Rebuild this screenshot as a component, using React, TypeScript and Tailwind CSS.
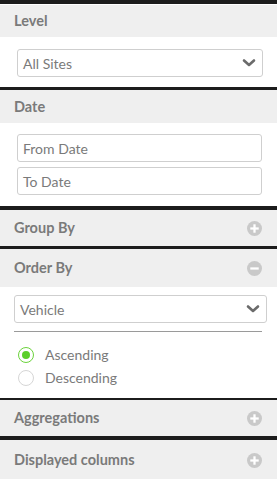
import React from 'react';

const font = { fontFamily: 'Lato, "Noto Sans", sans-serif' };

const Chevron = () => (
  <svg width="14" height="10" viewBox="0 0 14 10" className="shrink-0">
    <path d="M2 2.5 L7 7 L12 2.5" fill="none" stroke="#6b6b6b" strokeWidth="2.6" strokeLinecap="round" strokeLinejoin="round" />
  </svg>
);

const CircleIcon: React.FC<{ minus?: boolean }> = ({ minus }) => (
  <svg width="15" height="15" viewBox="0 0 16 16" className="shrink-0">
    <circle cx="8" cy="8" r="8" fill="#c9c9c9" />
    <rect x="3.5" y="6.8" width="9" height="2.4" fill="#fff" />
    {!minus && <rect x="6.8" y="3.5" width="2.4" height="9" fill="#fff" />}
  </svg>
);

const Header: React.FC<{ title: string; icon?: 'plus' | 'minus'; h: string }> = ({ title, icon, h }) => (
  <div className={`flex items-center justify-between bg-[#efefef] pl-[14px] pr-[15px] ${h}`}>
    <span className="text-[14.5px] font-bold text-[#7a7a7a]">{title}</span>
    {icon && <CircleIcon minus={icon === 'minus'} />}
  </div>
);

const Select: React.FC<{ value: string; className?: string }> = ({ value, className }) => (
  <div className={`flex h-[28px] items-center justify-between rounded-[3px] border border-[#cfcfcf] bg-white pl-[5px] pr-[6px] ${className ?? ''}`}>
    <span className="text-[14px] text-[#7a7a7a]">{value}</span>
    <Chevron />
  </div>
);

const Input: React.FC<{ placeholder: string }> = ({ placeholder }) => (
  <div className="flex h-[28px] items-center rounded-[3px] border border-[#cfcfcf] bg-white pl-[5px]">
    <span className="text-[14px] text-[#7a7a7a]">{placeholder}</span>
  </div>
);

const Radio: React.FC<{ label: string; checked?: boolean }> = ({ label, checked }) => (
  <div className="flex h-[23px] items-center gap-[11px] pl-[18px]">
    <div
      className={`flex h-[16px] w-[16px] items-center justify-center rounded-full border ${
        checked ? 'border-[#6cd33c]' : 'border-[#d6d6d6]'
      } bg-white`}
    >
      {checked && <div className="h-[8px] w-[8px] rounded-full bg-[#5ccf2a]" />}
    </div>
    <span className="text-[14px] text-[#7a7a7a]">{label}</span>
  </div>
);

export default function App() {
  return (
    <div className="h-[479px] w-[277px] overflow-hidden bg-[#1c1c1c] pt-[4px]" style={font}>
      <div className="border-t border-white">
        <Header title="Level" h="h-[32px]" />
        <div className="bg-white pb-[10px] pl-[17px] pr-[14px] pt-[12px]">
          <Select value="All Sites" />
        </div>
      </div>

      <div className="mt-[3px]">
        <Header title="Date" h="h-[33px]" />
        <div className="flex flex-col gap-[5px] bg-white pb-[11px] pl-[17px] pr-[15px] pt-[11px]">
          <Input placeholder="From Date" />
          <Input placeholder="To Date" />
        </div>
      </div>

      <div className="mt-[4px]">
        <Header title="Group By" icon="plus" h="h-[36px]" />
      </div>

      <div className="mt-[3px]">
        <Header title="Order By" icon="minus" h="h-[38px]" />
        <div className="bg-white pb-[9px] pt-[8px]">
          <Select value="Vehicle" className="ml-[14px] mr-[10px]" />
          <div className="ml-[14px] mr-[15px] mt-[8px] h-px bg-[#9a9a9a]" />
          <div className="mt-[11px]">
            <Radio label="Ascending" checked />
            <Radio label="Descending" />
          </div>
        </div>
      </div>

      <div className="mt-[2px]">
        <Header title="Aggregations" icon="plus" h="h-[36px]" />
      </div>

      <div className="mt-[4px]">
        <Header title="Displayed columns" icon="plus" h="h-[40px]" />
      </div>
    </div>
  );
}
